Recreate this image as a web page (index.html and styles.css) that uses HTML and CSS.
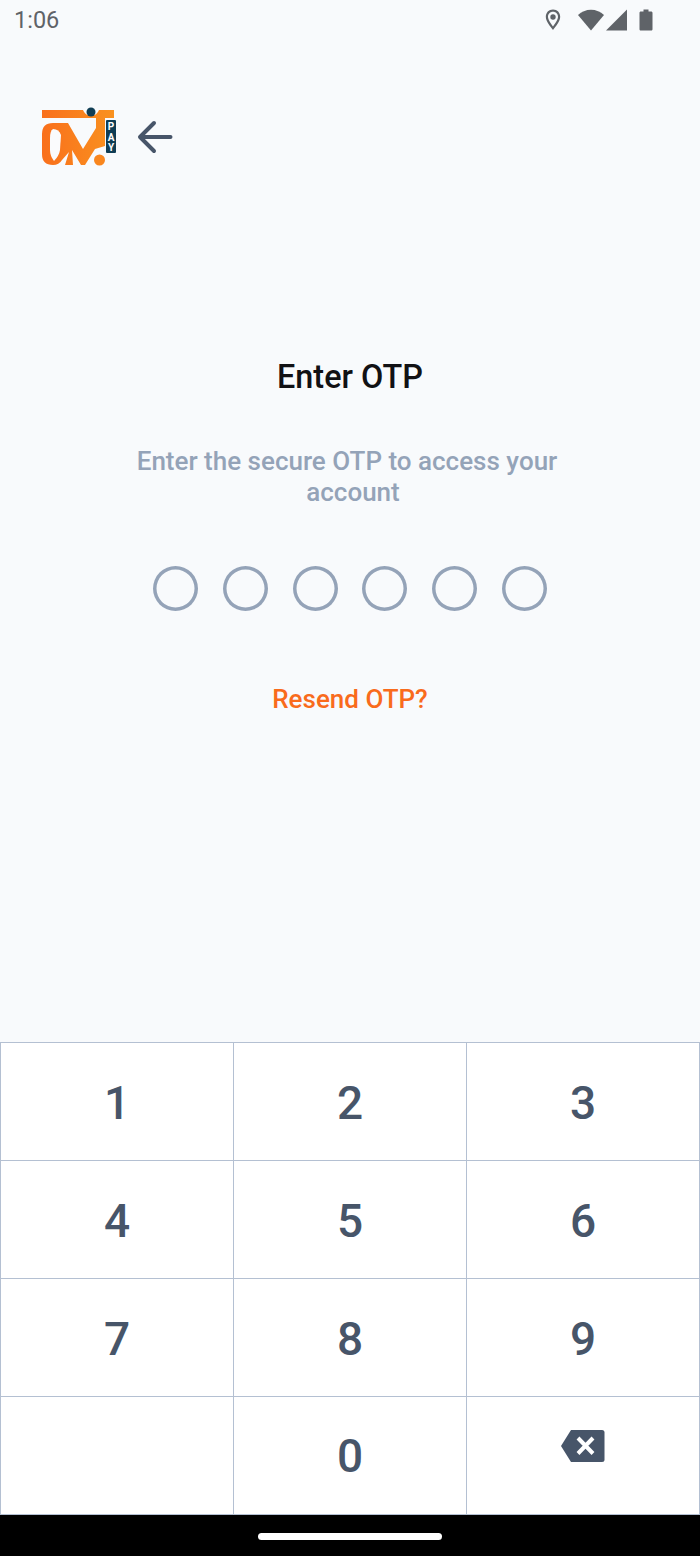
FILE: index.html
```html
<!DOCTYPE html>
<html>
  <head>
    <meta charset="utf-8" />
    <title>Enter OTP</title>
    <link rel="stylesheet" href="styles.css">
  </head>
  <body>
    <div class="screen">
      <div class="status-bar">
        <span class="clock">1:06</span>
        <div class="status-icons">
          <svg class="ico-pin" width="16" height="22" viewBox="0 0 16 22">
            <path fill-rule="evenodd" fill="#5f6368" d="M8 0.500C3.700 0.500 0.800 3.700 0.800 7.800c0 4.300 4.500 9.900 7.200 13.200 2.700-3.300 7.200-8.900 7.200-13.200C15.200 3.700 12.300 0.500 8 0.500zm0 2.200c2.900 0 5 2.200 5 5.100 0 2.700-2.700 6.600-5 9.600-2.300-3-5-6.900-5-9.600 0-2.900 2.100-5.100 5-5.100z"/>
            <circle cx="8" cy="8" r="2.700" fill="#5f6368"/>
          </svg>
          <svg class="ico-wifi" width="26" height="22" viewBox="0 0 26 22">
            <path fill="#5f6368" d="M0 6C3.500 2.800 8 0.800 13 0.800s9.500 2 13 5.200L13 21.500z"/>
          </svg>
          <svg class="ico-signal" width="21" height="22" viewBox="0 0 21 22">
            <path fill="#5f6368" d="M21 0.500V21.500H0z"/>
          </svg>
          <svg class="ico-battery" width="14" height="22" viewBox="0 0 14 22">
            <path fill="#5f6368" d="M4.500 0.500h5v2h2.700c.6 0 1.300.6 1.300 1.300v16.400c0 .7-.6 1.300-1.300 1.300H1.800c-.7 0-1.300-.6-1.300-1.300V3.800c0-.7.6-1.300 1.300-1.300h2.700z"/>
          </svg>
        </div>
      </div>

      <div class="top-row">
        <svg class="logo" width="76" height="58" viewBox="0 0 76 58">
          <defs>
            <linearGradient id="logoFill" gradientUnits="userSpaceOnUse" x1="0" y1="0" x2="74" y2="0">
              <stop offset="0" stop-color="#f96f1c"/>
              <stop offset="1" stop-color="#f9921f"/>
            </linearGradient>
          </defs>
          <path fill="url(#logoFill)" d="M1 2H42a8.500 8.500 0 0 0 16 0H73V10H64V38L54 41 44 57H40L31 42 32 57H24L28 44 21 52Q18 57 12 57 1 57 1 46V26Q1 15 12 15H27L42 41 55 20V10H1z"/>
          <path fill="#fafbfd" d="M12 21Q9 23 9 30V42Q9 48 13 53 18 48 19 42L20 27Q18 21 12 21z"/>
          <circle cx="50" cy="4" r="4.500" fill="#0f3d54"/>
          <circle cx="58.500" cy="52" r="5.500" fill="#f9861e"/>
          <rect x="65" y="12" width="10" height="33" rx="1" fill="#0f3d54"/>
          <text class="logo-pay" x="70" y="22">P</text>
          <text class="logo-pay" x="70" y="32.500">A</text>
          <text class="logo-pay" x="70" y="43">Y</text>
        </svg>
        <svg class="back" width="36" height="36" viewBox="0 0 36 36">
          <path fill="none" stroke="#475569" stroke-width="4" stroke-linecap="round" stroke-linejoin="round" d="M33.500 18H3.500M17 4 3 18 17 32"/>
        </svg>
      </div>

      <div class="otp">
        <h1 class="otp-title">Enter OTP</h1>
        <p class="otp-text">
          <span class="line-one">Enter the secure OTP to access your</span>
          <span class="line-two">account</span>
        </p>
        <div class="otp-dots">
          <span class="dot"></span>
          <span class="dot"></span>
          <span class="dot"></span>
          <span class="dot"></span>
          <span class="dot"></span>
          <span class="dot"></span>
        </div>
        <div class="resend">Resend OTP?</div>
      </div>

      <div class="keypad">
        <div class="key">1</div>
        <div class="key">2</div>
        <div class="key">3</div>
        <div class="key">4</div>
        <div class="key">5</div>
        <div class="key">6</div>
        <div class="key">7</div>
        <div class="key">8</div>
        <div class="key">9</div>
        <div class="key"></div>
        <div class="key key-zero">0</div>
        <div class="key key-del">
          <svg width="44" height="32" viewBox="0 0 44 32">
            <path fill="#475569" d="M10 0H41a2.500 2.500 0 0 1 2.500 2.500v27A2.500 2.500 0 0 1 41 32H10L0 16z"/>
            <path fill="none" stroke="#fff" stroke-width="4" d="M17 8 32 23.500M32 8 17 23.500"/>
          </svg>
        </div>
      </div>

      <div class="nav-bar"><span class="nav-pill"></span></div>
    </div>
  </body>
</html>
```

FILE: styles.css
```css
html {
  margin: 0px;
  padding: 0px;
}
body {
  font-family: 'Roboto', sans-serif;
  margin: 0px;
  padding: 0px;
  color: #475569;
  background-color: #f8fafc;
}
.screen {
  width: 700px;
  height: 1556px;
  display: flex;
  flex-direction: column;
  overflow: hidden;
}
.status-bar {
  height: 40px;
  padding: 0px 47px 0px 14px;
  display: flex;
  align-items: center;
  justify-content: space-between;
}
.clock {
  font-size: 23.5px;
  color: #5f6368;
}
.status-icons {
  display: flex;
  align-items: center;
}
.status-icons svg {
  display: block;
}
.ico-pin {
  margin-right: 17px;
}
.ico-wifi {
  margin-right: 2px;
}
.ico-signal {
  margin-right: 12px;
}
.top-row {
  margin-top: 67px;
  height: 60px;
  padding-left: 41px;
  display: flex;
  align-items: center;
}
.logo {
  display: block;
  overflow: visible;
}
.back {
  display: block;
  margin-left: 20px;
}
.logo-pay {
  font-size: 10px;
  font-weight: 700;
  fill: #ffffff;
  text-anchor: middle;
}
.otp {
  height: 875px;
  padding-top: 229px;
  box-sizing: border-box;
  text-align: center;
}
.otp-title {
  margin: -39px 0px 0px;
  font-size: 32.4px;
  line-height: 40px;
  font-weight: 500;
  color: #111114;
}
.otp-text {
  margin: 49px 0px 0px;
  font-size: 26px;
  line-height: 31px;
  font-weight: 500;
  color: #94a3b8;
}
.line-one {
  display: block;
  padding-right: 6px;
}
.line-two {
  display: block;
  padding-left: 6px;
}
.otp-dots {
  margin-top: 58px;
  display: flex;
  justify-content: center;
  gap: 24.8px;
}
.dot {
  width: 45px;
  height: 45px;
  border-radius: 50%;
  box-shadow: inset 0px 0px 0px 3.5px #94a3b8;
}
.resend {
  margin-top: 72px;
  font-size: 26px;
  line-height: 32px;
  font-weight: 500;
  color: #f96b1c;
}
.keypad {
  height: 473px;
  display: grid;
  grid-template-columns: repeat(3, 1fr);
  grid-template-rows: repeat(4, 1fr);
  background-color: #ffffff;
  border-top: 1px solid #b4c0d2;
  border-left: 1px solid #b4c0d2;
  box-sizing: border-box;
}
.key {
  display: flex;
  align-items: center;
  justify-content: center;
  padding-top: 2px;
  font-size: 46px;
  font-weight: 500;
  color: #475569;
  border-right: 1px solid #b4c0d2;
  border-bottom: 1px solid #b4c0d2;
}
.key-zero {
  padding-top: 1px;
}
.key-del {
  padding-top: 0px;
  padding-bottom: 19px;
}
.key-del svg {
  display: block;
}
.nav-bar {
  flex: 1;
  background-color: #000000;
  display: flex;
  justify-content: center;
  padding-top: 18px;
}
.nav-pill {
  width: 184px;
  height: 7px;
  border-radius: 4px;
  background-color: #ffffff;
}
```
